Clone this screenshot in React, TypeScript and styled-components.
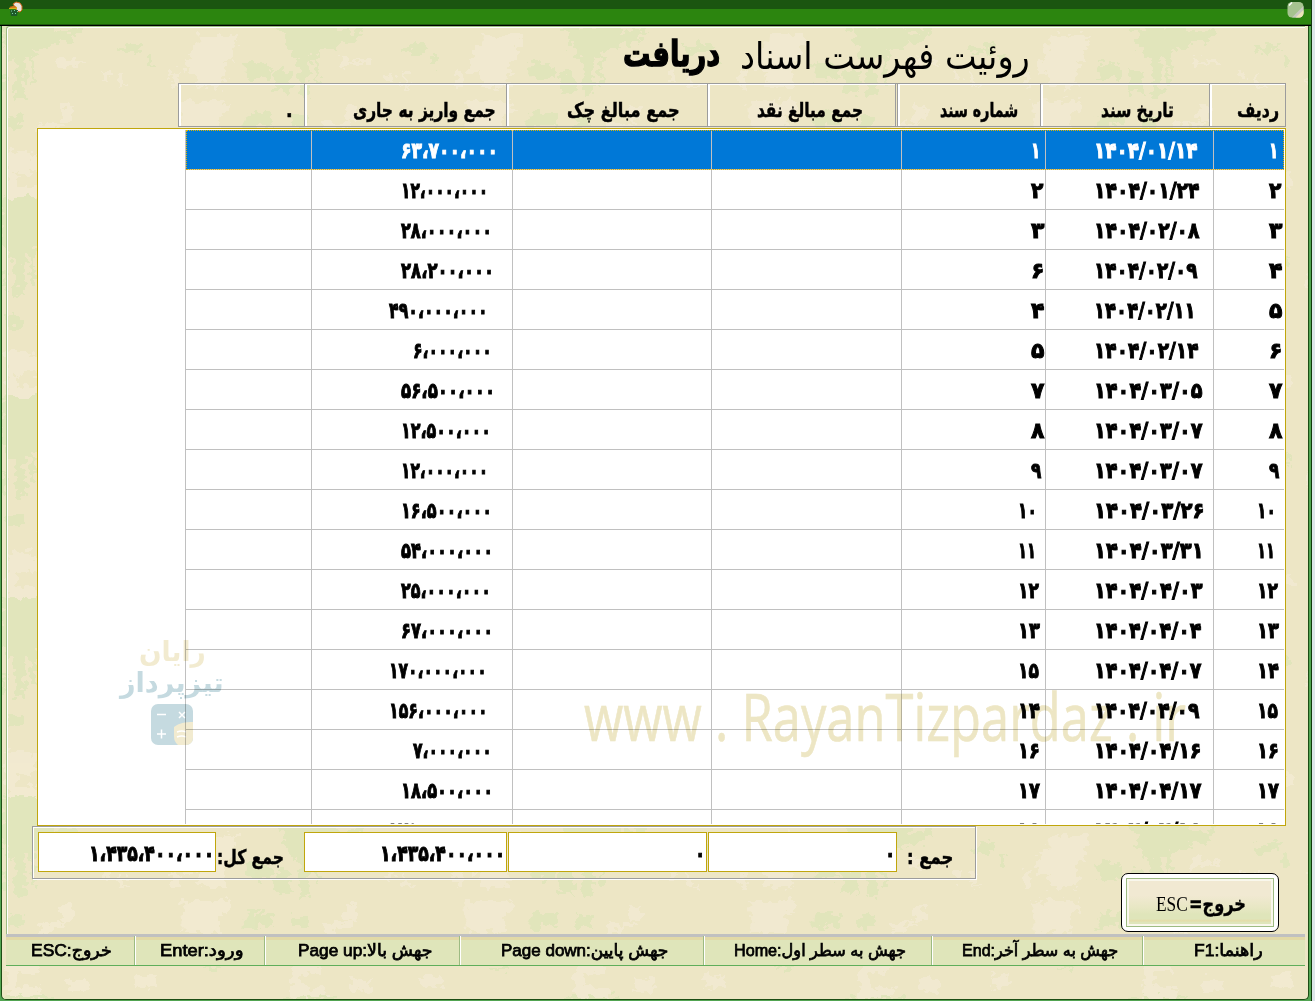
import React, { useLayoutEffect, useRef, useState } from "react";
import styled, { createGlobalStyle } from "styled-components";

const BOLD_FONT = '"DejaVu Sans", "Noto Sans", sans-serif';
const LINE = "#c0c0c0";
const GOLD = "#c0a60c";

const Global = createGlobalStyle`
  *, *::before, *::after { box-sizing: border-box; }
  body { margin: 0; background: #dfe6ea; overflow: hidden; font-family: ${BOLD_FONT}; color: #000; }
`;

/* ---------- text scaled horizontally to the width of its slot ---------- */
const FitBox = styled.span<{ $w: number; $size: number; $weight: number; $family: string; $stroke: number; $lift: number }>`
  display: block;
  flex: none;
  width: ${(p) => p.$w}px;
  font: ${(p) => p.$weight} ${(p) => p.$size}px/1 ${(p) => p.$family};
  -webkit-text-stroke: ${(p) => p.$stroke}px currentColor;
  padding-bottom: ${(p) => p.$lift}px;
  direction: ltr;
  white-space: pre;
`;
const FitInner = styled.span`
  display: inline-block;
  transform-origin: 0 50%;
`;

type FitProps = {
  w: number;
  size?: number;
  weight?: number;
  family?: string;
  stroke?: number;
  lift?: number;
  rtl?: boolean;
  children: string;
};

function Fit({ w, size = 21, weight = 700, family = BOLD_FONT, stroke = 0, lift = 0, rtl = true, children }: FitProps) {
  const ref = useRef<HTMLSpanElement>(null);
  const [scale, setScale] = useState(1);
  useLayoutEffect(() => {
    if (ref.current) setScale(w / ref.current.offsetWidth);
  }, [w, children]);
  return (
    <FitBox $w={w} $size={size} $weight={weight} $family={family} $stroke={stroke} $lift={lift}>
      <FitInner ref={ref} dir={rtl ? "rtl" : "ltr"} style={{ transform: `scaleX(${scale})` }}>
        {children}
      </FitInner>
    </FitBox>
  );
}

const Digits = ({ w, children }: { w: number; children: string }) => (
  <Fit w={w} size={22} rtl={false} stroke={1}>{children}</Fit>
);

/* ---------- window frame ---------- */
const Window = styled.main`
  position: relative;
  width: 1312px;
  height: 1001px;
  display: flex;
  flex-direction: column;
  border-right: 1px solid #123b0c;
  background: #52a552;
`;
const TitleBar = styled.header`
  flex: none;
  height: 26px;
  display: flex;
  justify-content: space-between;
  padding: 1px 7px 0 8px;
  background: linear-gradient(#1b5510 0 9px, #2c850f 9px 24px, #1d5a0c 24px 25px, #000 25px);
`;
const Body = styled.section`
  position: relative;
  isolation: isolate;
  flex: 1;
  display: flex;
  flex-direction: column;
  margin: 0 2px 1px 1px;
  border: solid #1c4d14;
  border-width: 0 1px 1px 1px;
  border-radius: 0 0 5px 5px;
  overflow: hidden;
  background: #ede6c5;
`;
const TextureSvg = styled.svg`
  position: absolute;
  inset: 0;
  z-index: -1;
`;
const Form = styled.div`
  flex: none;
  height: 908px;
  margin: 0 3px 0 4px;
  display: flex;
  flex-direction: column;
  border: solid #9dbb82;
  border-width: 1px 0 0 1px;
  border-radius: 3px 0 0 0;
  box-shadow: inset 1px 1px 0 #fff;
`;

/* ---------- heading ---------- */
const Heading = styled.h1`
  flex: none;
  margin: 0;
  height: 56px;
  padding: 3px 0 0 616px;
  display: flex;
  align-items: center;
  gap: 20px;
`;

/* ---------- column captions ---------- */
const Captions = styled.div`
  flex: none;
  height: 44px;
  width: 1108px;
  margin-left: 171px;
  display: flex;
  border: 1px solid #9c9c9c;
`;
const Caption = styled.div<{ $w: number; $pad: number; $double?: boolean }>`
  width: ${(p) => p.$w}px;
  padding: 9px 0 0 ${(p) => p.$pad}px;
  display: flex;
  align-items: center;
  border-right: ${(p) => (p.$double ? "3px double" : "1px solid")} #9c9c9c;
  box-shadow: inset 2px 1px 0 #fff;
  &:last-child { border-right: 0; }
`;

/* ---------- grid ---------- */
const Grid = styled.div`
  flex: none;
  width: 1249px;
  height: 698px;
  margin: 1px 0 0 30px;
  padding: 1px 1px 1px 147px;
  border: 1px solid ${GOLD};
  background: #fff;
  overflow: hidden;
`;
const Rows = styled.div`
  height: 694px;
  overflow: hidden;
  border-left: 1px solid ${LINE};
`;
const Cell = styled.div<{ $pad?: number }>`
  display: flex;
  align-items: center;
  padding-left: ${(p) => p.$pad ?? 0}px;
  padding-top: 3px;
  border-right: 1px solid ${LINE};
  &:last-child { border-right: 0; }
`;
const Row = styled.div<{ $active: boolean }>`
  height: 40px;
  display: grid;
  grid-template-columns: 126px 201px 199px 190px 144px 168px 1fr;
  border-bottom: 1px solid ${LINE};
  color: ${(p) => (p.$active ? "#fff" : "#000")};
  background: ${(p) => (p.$active ? "#0078d7" : "#fff")};
  outline: ${(p) => (p.$active ? `1px dotted #e0b400` : "none")};
  outline-offset: -1px;
`;

/* ---------- totals ---------- */
const Footer = styled.div`
  flex: none;
  height: 108px;
  padding-left: 25px;
  display: flex;
  align-items: flex-start;
`;
const Totals = styled.div`
  width: 944px;
  height: 53px;
  display: flex;
  align-items: flex-start;
  padding: 5px 0 0 5px;
  border: 1px solid #9c9c9c;
  box-shadow: inset 1px 1px 0 #fff, 1px 1px 0 #fff;
`;
const Total = styled.div<{ $w: number; $gap?: number }>`
  width: ${(p) => p.$w}px;
  height: 40px;
  margin-right: ${(p) => p.$gap ?? 0}px;
  padding: 3px 1px 0 0;
  display: flex;
  justify-content: flex-end;
  align-items: center;
  border: 1px solid ${GOLD};
  background: #fff;
`;
const TotalLabel = styled.div<{ $w: number; $pad: number }>`
  width: ${(p) => p.$w}px;
  height: 40px;
  padding: 10px 0 0 ${(p) => p.$pad}px;
  display: flex;
  align-items: center;
`;
const ExitButton = styled.button`
  width: 158px;
  height: 59px;
  margin: 47px 0 0 145px;
  padding: 4px;
  border: 1px solid #000;
  border-radius: 7px;
  background: #fff;
`;
const ExitFace = styled.span`
  width: 100%;
  height: 100%;
  display: flex;
  align-items: center;
  padding: 3px 0 0 29px;
  gap: 1px;
  border: 1px solid #9dbb82;
  box-shadow: inset 0 0 0 2px #f9f7ec;
  background: linear-gradient(#f1e9d2 0 35%, #e8e7c4 60%, #dfe5ba 75%, #dfe5ba 85%, #e4dca8 89%, #dfe5ba 92%);
`;

/* ---------- status bar ---------- */
const StatusBar = styled.footer`
  flex: none;
  height: 32px;
  width: 1299px;
  margin-left: 4px;
  display: flex;
  padding-top: 2px;
  border-bottom: 1px solid #5fae5b;
  background: linear-gradient(${LINE} 0 3px, #e2d9a6 3px 6px, #dfe5ba 6px);
`;
const StatusCell = styled.div<{ $w: number; $pad: number }>`
  width: ${(p) => p.$w}px;
  height: 29px;
  padding: 0 0 1px ${(p) => p.$pad}px;
  display: flex;
  align-items: center;
  border-right: 1px solid #fff;
  box-shadow: inset -1px 0 0 #9dbb82;
  &:last-child { border-right: 0; box-shadow: none; }
`;

/* ---------- watermark over the grid ---------- */
const SiteMark = styled.div`
  position: absolute;
  left: 582px;
  top: 656px;
  mix-blend-mode: multiply;
  pointer-events: none;
  color: #ede6c4;
`;
const BrandMark = styled.div`
  position: absolute;
  left: 118px;
  top: 609px;
  width: 104px;
  display: flex;
  flex-direction: column;
  align-items: center;
  mix-blend-mode: multiply;
  pointer-events: none;
`;
const BrandLine = styled.div<{ $c: string; $h: number; $top?: number }>`
  height: ${(p) => p.$h}px;
  padding-top: ${(p) => p.$top ?? 0}px;
  color: ${(p) => p.$c};
`;

const GREEN = "#dfe5ba";
const PALE = "#f2ead2";

function Texture() {
  return (
    <TextureSvg width="1308" height="975" aria-hidden="true">
      <defs>
        <pattern id="parchment" width="284" height="200" patternUnits="userSpaceOnUse" x="5" y="-29">
          <path
            fill={GREEN}
            d="M0 0H46V52H28V88H24V60H18V100H8V62H0ZM46 34H66V46H46ZM66 30H72V38H66ZM110 49H124V46H136V54H128V56H110ZM140 58H146V68H140ZM238 66H260V70H264V82H240ZM268 74H284V96H268ZM272 0H284V50H278V34H272ZM0 118H16V130H0ZM240 116H266V128H250V132H236ZM90 150H110V154H90ZM200 168H216V172H200Z"
          />
          <path
            fill={PALE}
            d="M50 60H58V64H80V67H62V70H50ZM96 74H102V84H96ZM112 76H116V88H124V90H112ZM192 38H230V50H226V64H218V90H190V76H178V62H184V50H190ZM164 74H172V90H164ZM174 104H222V116H212V136H176ZM54 108H66V124H54ZM32 126H60V130H44V136H32ZM0 154H24V160H30V176H10V190H34V200H0ZM60 182H80V194H60ZM130 178H150V190H130Z"
          />
        </pattern>
        <filter id="ragged" x="0" y="0" width="100%" height="100%" colorInterpolationFilters="sRGB">
          <feTurbulence type="fractalNoise" baseFrequency="0.13 0.16" numOctaves="2" seed="4" />
          <feDisplacementMap in="SourceGraphic" scale="16" xChannelSelector="R" yChannelSelector="G" />
        </filter>
      </defs>
      <rect width="1308" height="975" fill="url(#parchment)" filter="url(#ragged)" opacity="0.85" />
    </TextureSvg>
  );
}

const AppIcon = () => (
  <svg width="16" height="16" viewBox="0 0 16 16" aria-hidden="true">
    <path d="M5 3l3-2 4 1 2 3v4l-2 2-3-1-2-4z" fill="#e8e4dc" stroke="#d0661c" strokeWidth="1" />
    <path d="M1 7l4-2 4 1v2H1z" fill="#d8b21c" />
    <path d="M2 9h8l-1 6H3z" fill="#1e5a2a" />
    <path d="M3 10h1M6 9.500h1M4 12.500h1M7 12.500h1M9 10.500h1" stroke="#7fd0a0" strokeWidth="1" />
    <path d="M2 6h6" stroke="#d0481c" strokeWidth="1" />
  </svg>
);
const CloseIcon = () => (
  <svg width="17" height="17" viewBox="0 0 17 17" aria-hidden="true">
    <rect x="0.500" y="1" width="16" height="15.500" rx="4.500" fill="#a6c38f" />
    <path d="M16.500 5v7a4.500 4.500 0 0 1-4.500 4.500H5z" fill="#c9c9c0" />
    <path d="M16.500 9v3a4.500 4.500 0 0 1-4.500 4.500H8.500z" fill="#ece5b8" />
    <path d="M2 4.500L5 1.500" stroke="#fff" strokeWidth="1.500" />
  </svg>
);

const captions: { text: string; w: number; pad: number; tw: number; double?: boolean }[] = [
  { text: ".", w: 126, pad: 107, tw: 7 },
  { text: "جمع واریز به جاری", w: 202, pad: 48, tw: 143 },
  { text: "جمع مبالغ چک", w: 201, pad: 60, tw: 113 },
  { text: "جمع مبالغ نقد", w: 190, pad: 49, tw: 106, double: true },
  { text: "شماره سند", w: 143, pad: 42, tw: 78 },
  { text: "تاریخ سند", w: 169, pad: 60, tw: 73 },
  { text: "ردیف", w: 75, pad: 27, tw: 42 },
];

/* row number, date, date width, document number, amount, amount start, amount width */
const rows: [string, string, number, string, string, number, number][] = [
  ["۱", "۱۴۰۴/۰۱/۱۴", 104, "۱", "۶۳،۷۰۰،۰۰۰", 89, 97],
  ["۲", "۱۴۰۴/۰۱/۲۴", 106, "۲", "۱۲،۰۰۰،۰۰۰", 89, 87],
  ["۳", "۱۴۰۴/۰۲/۰۸", 106, "۳", "۲۸،۰۰۰،۰۰۰", 89, 91],
  ["۴", "۱۴۰۴/۰۲/۰۹", 104, "۶", "۲۸،۲۰۰،۰۰۰", 89, 93],
  ["۵", "۱۴۰۴/۰۲/۱۱", 102, "۴", "۴۹۰،۰۰۰،۰۰۰", 77, 99],
  ["۶", "۱۴۰۴/۰۲/۱۴", 105, "۵", "۶،۰۰۰،۰۰۰", 101, 79],
  ["۷", "۱۴۰۴/۰۳/۰۵", 109, "۷", "۵۶،۵۰۰،۰۰۰", 89, 94],
  ["۸", "۱۴۰۴/۰۳/۰۷", 109, "۸", "۱۲،۵۰۰،۰۰۰", 89, 90],
  ["۹", "۱۴۰۴/۰۳/۰۷", 109, "۹", "۱۲،۰۰۰،۰۰۰", 89, 87],
  ["۱۰", "۱۴۰۴/۰۳/۲۶", 111, "۱۰", "۱۶،۵۰۰،۰۰۰", 89, 91],
  ["۱۱", "۱۴۰۴/۰۳/۳۱", 110, "۱۱", "۵۴،۰۰۰،۰۰۰", 89, 92],
  ["۱۲", "۱۴۰۴/۰۴/۰۳", 109, "۱۲", "۲۵،۰۰۰،۰۰۰", 89, 90],
  ["۱۳", "۱۴۰۴/۰۴/۰۴", 108, "۱۳", "۶۷،۰۰۰،۰۰۰", 89, 92],
  ["۱۴", "۱۴۰۴/۰۴/۰۷", 108, "۱۵", "۱۷۰،۰۰۰،۰۰۰", 77, 98],
  ["۱۵", "۱۴۰۴/۰۴/۰۹", 106, "۱۴", "۱۵۶،۰۰۰،۰۰۰", 77, 99],
  ["۱۶", "۱۴۰۴/۰۴/۱۶", 108, "۱۶", "۷،۰۰۰،۰۰۰", 101, 79],
  ["۱۷", "۱۴۰۴/۰۴/۱۷", 108, "۱۷", "۱۸،۵۰۰،۰۰۰", 89, 92],
  ["۱۸", "۱۴۰۴/۰۴/۱۸", 108, "۱۸", "۱۷۵،۰۰۰،۰۰۰", 77, 98],
];

const numberWidths: Record<string, number> = { "۱": 9, "۹": 10, "۲": 12, "۱۰": 19, "۱۱": 18, "۱۲": 21, "۱۵": 21 };
const numberWidth = (n: string) => numberWidths[n] ?? (n.length === 2 ? 22 : 13);

const hints: { text: string; w: number; pad: number; tw: number }[] = [
  { text: "خروج:ESC", w: 130, pad: 25, tw: 81 },
  { text: "ورود:Enter", w: 130, pad: 24, tw: 84 },
  { text: "جهش بالا:Page up", w: 195, pad: 32, tw: 134 },
  { text: "جهش پایین:Page down", w: 244, pad: 40, tw: 167 },
  { text: "جهش به سطر اول:Home", w: 228, pad: 29, tw: 172 },
  { text: "جهش به سطر آخر:End", w: 211, pad: 29, tw: 156 },
  { text: "راهنما:F1", w: 161, pad: 50, tw: 69 },
];

export default function App() {
  return (
    <>
      <Global />
      <Window>
        <TitleBar>
          <AppIcon />
          <CloseIcon />
        </TitleBar>
        <Body>
          <Texture />
          <Form>
            <Heading>
              <Fit w={97} size={35} stroke={1.4} lift={5}>دریافت</Fit>
              <Fit w={290} size={37} weight={400}>روئیت فهرست اسناد</Fit>
            </Heading>
            <Captions>
              {captions.map((c) => (
                <Caption key={c.text} $w={c.w} $pad={c.pad} $double={c.double}>
                  <Fit w={c.tw} size={20} stroke={0.5}>{c.text}</Fit>
                </Caption>
              ))}
            </Captions>
            <Grid>
              <Rows>
                {rows.map(([no, date, dateW, doc, amount, start, amountW], i) => (
                  <Row key={no} $active={i === 0}>
                    <Cell />
                    <Cell $pad={start}>
                      <Digits w={amountW}>{amount}</Digits>
                    </Cell>
                    <Cell />
                    <Cell />
                    <Cell $pad={doc.length === 2 ? 116 : 129}>
                      <Digits w={numberWidth(doc)}>{doc}</Digits>
                    </Cell>
                    <Cell $pad={48}>
                      <Digits w={dateW}>{date}</Digits>
                    </Cell>
                    <Cell $pad={no.length === 2 ? 43 : 55}>
                      <Digits w={numberWidth(no)}>{no}</Digits>
                    </Cell>
                  </Row>
                ))}
              </Rows>
            </Grid>
            <Footer>
              <Totals>
                <Total $w={178}>
                  <Digits w={125}>۱،۴۳۵،۴۰۰،۰۰۰</Digits>
                </Total>
                <TotalLabel $w={88} $pad={1}>
                  <Fit w={67} size={20} stroke={0.5}>جمع کل:</Fit>
                </TotalLabel>
                <Total $w={203} $gap={1}>
                  <Digits w={125}>۱،۴۳۵،۴۰۰،۰۰۰</Digits>
                </Total>
                <Total $w={199} $gap={1}>
                  <Digits w={10}>۰</Digits>
                </Total>
                <Total $w={189}>
                  <Digits w={10}>۰</Digits>
                </Total>
                <TotalLabel $w={60} $pad={10}>
                  <Fit w={46} size={20} stroke={0.5}>جمع :</Fit>
                </TotalLabel>
              </Totals>
              <ExitButton type="button">
                <ExitFace>
                  <Fit w={32} size={20} weight={400} family='"Liberation Serif", serif' rtl={false}>ESC</Fit>
                  <Fit w={57} size={21} stroke={0.4}>خروج=</Fit>
                </ExitFace>
              </ExitButton>
            </Footer>
          </Form>
          <StatusBar>
            {hints.map((h) => (
              <StatusCell key={h.text} $w={h.w} $pad={h.pad}>
                <Fit w={h.tw} size={17} weight={400} stroke={0.75} family='"Liberation Sans", "DejaVu Sans", sans-serif'>
                  {h.text}
                </Fit>
              </StatusCell>
            ))}
          </StatusBar>
          <SiteMark>
            <Fit w={602} size={66} weight={400} stroke={0.6} rtl={false} family='"Open Sans", "Noto Sans", sans-serif'>
              www . RayanTizpardaz . ir
            </Fit>
          </SiteMark>
          <BrandMark>
            <BrandLine $c="#f2ebd0" $h={34} $top={3}>
              <Fit w={67} size={28}>رایان</Fit>
            </BrandLine>
            <BrandLine $c="#c5dae0" $h={35}>
              <Fit w={104} size={27}>تیزپرداز</Fit>
            </BrandLine>
            <svg width="42" height="41" viewBox="0 0 42 41" aria-hidden="true">
              <rect width="42" height="41" rx="7" fill="#c5dae0" />
              <path d="M23 23c5-4 11-5 19-5v16a7 7 0 0 1-7 7h-8q-4-3-4-9z" fill="#f2ebd0" />
              <path d="M6 10.500h9M6 30h9M10.500 25.500v9M28 8l6 6M34 8l-6 6M26 28q5-2 9 0M26 33q5-2 9 0" stroke="#fff" strokeWidth="1.500" fill="none" />
            </svg>
          </BrandMark>
        </Body>
      </Window>
    </>
  );
}
